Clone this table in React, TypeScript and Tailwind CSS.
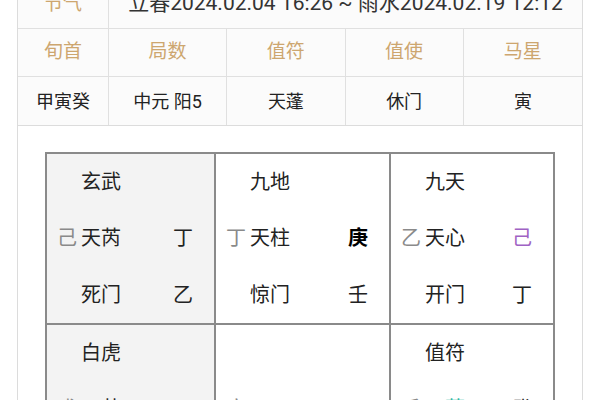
import React from "react";

type Cell = {
  god: string;
  tail: string;
  star: string;
  starColor?: string;
  starRight: string;
  starRightClass?: string;
  door: string;
  doorRight: string;
  gray?: boolean;
};

const cells: Cell[] = [
  { god: "玄武", tail: "己", star: "天芮", starRight: "丁", door: "死门", doorRight: "乙", gray: true },
  { god: "九地", tail: "丁", star: "天柱", starRight: "庚", starRightClass: "font-bold text-black", door: "惊门", doorRight: "壬" },
  { god: "九天", tail: "乙", star: "天心", starRight: "己", starRightClass: "text-[#a062c4]", door: "开门", doorRight: "丁" },
  { god: "白虎", tail: "戊", star: "天英", starRight: "丁", door: "", doorRight: "", gray: true },
  { god: "", tail: "庚", star: "", starRight: "", door: "", doorRight: "" },
  { god: "值符", tail: "壬", star: "天蓬", starColor: "text-[#2db8a3]", starRight: "癸", door: "", doorRight: "" },
];

function Palace({ c }: { c: Cell }) {
  return (
    <div className={`flex h-[169px] flex-col ${c.gray ? "bg-[#f3f3f3]" : "bg-white"}`}>
      <div className="flex h-[55px] items-center pl-[34px]">{c.god}</div>
      <div className="flex h-[58px] items-center pr-[21px]">
        <span className="w-[34px] pl-[10px] text-[#8a8a8a]">{c.tail}</span>
        <span className={c.starColor ?? ""}>{c.star}</span>
        <span className={`ml-auto ${c.starRightClass ?? ""}`}>{c.starRight}</span>
      </div>
      <div className="flex h-[56px] items-center pr-[21px] pl-[34px]">
        <span>{c.door}</span>
        <span className="ml-auto">{c.doorRight}</span>
      </div>
    </div>
  );
}

export default function App() {
  const heads = ["旬首", "局数", "值符", "值使", "马星"];
  const vals = ["甲寅癸", "中元 阳5", "天蓬", "休门", "寅"];

  return (
    <div
      className="h-[400px] w-[600px] overflow-hidden bg-white"
      style={{ fontFamily: 'Roboto, "Noto Sans CJK SC", sans-serif' }}
    >
      <div className="mx-[17px] -mt-[20px] h-[440px] border-x border-[#dcdcdc]">
        {/* top info table */}
        <div className="bg-[#fbfbfb]">
          <div className="grid h-[49px] grid-cols-[91px_1fr] border-b border-[#e0e0e0]">
            <div className="flex items-center justify-center border-r border-[#e0e0e0] text-[19px] text-[#cda66f]">
              节气
            </div>
            <div className="flex items-center justify-center text-[21px] text-[#333]">
              立春2024.02.04 16:26 ~ 雨水2024.02.19 12:12
            </div>
          </div>
          <div className="grid h-[48px] grid-cols-[91px_1fr_1fr_1fr_1fr] border-b border-[#e0e0e0]">
            {heads.map((h, i) => (
              <div
                key={i}
                className={`flex items-center justify-center text-[19px] text-[#cda66f] ${i < 4 ? "border-r border-[#e0e0e0]" : ""}`}
              >
                {h}
              </div>
            ))}
          </div>
          <div className="grid h-[49px] grid-cols-[91px_1fr_1fr_1fr_1fr] border-b border-[#dcdcdc]">
            {vals.map((v, i) => (
              <div
                key={i}
                className={`flex items-center justify-center text-[18px] text-[#222] ${i < 4 ? "border-r border-[#e0e0e0]" : ""}`}
              >
                {v}
              </div>
            ))}
          </div>
        </div>

        {/* nine palaces */}
        <div className="px-[27px] pt-[26px]">
          <div className="grid grid-cols-[167px_173px_1fr] gap-[2px] border-2 border-[#8a8a8a] bg-[#8a8a8a] text-[20px] text-[#222]">
            {cells.map((c, i) => (
              <Palace key={i} c={c} />
            ))}
          </div>
        </div>
      </div>
    </div>
  );
}
